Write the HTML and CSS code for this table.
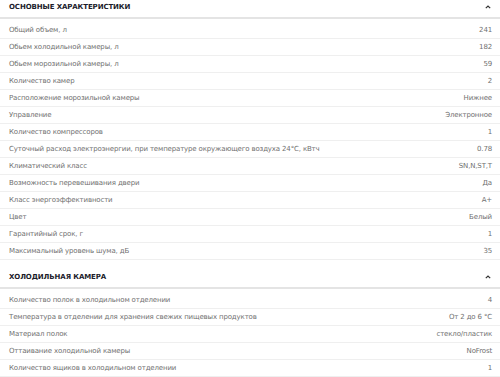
FILE: index.html
```html
<!DOCTYPE html>
<html lang="ru">
<head>
<meta charset="utf-8">
<link rel="stylesheet" href="styles.css">
</head>
<body>
<div class="specs">
  <section class="group">
    <div class="group-head">
      <span class="group-title">Основные характеристики</span>
      <svg class="chev" width="6" height="4" viewBox="0 0 6 4"><path d="M0.8 3.2 L3 1 L5.2 3.2" fill="none" stroke="#333" stroke-width="1.2"/></svg>
    </div>
    <div class="row"><span class="label">Общий объем, л</span><span class="value">241</span></div>
    <div class="row"><span class="label">Обьем холодильной камеры, л</span><span class="value">182</span></div>
    <div class="row"><span class="label">Обьем морозильной камеры, л</span><span class="value">59</span></div>
    <div class="row"><span class="label">Количество камер</span><span class="value">2</span></div>
    <div class="row"><span class="label">Расположение морозильной камеры</span><span class="value">Нижнее</span></div>
    <div class="row"><span class="label">Управление</span><span class="value">Электронное</span></div>
    <div class="row"><span class="label">Количество компрессоров</span><span class="value">1</span></div>
    <div class="row"><span class="label">Суточный расход электроэнергии, при температуре окружающего воздуха 24°С, кВтч</span><span class="value">0.78</span></div>
    <div class="row"><span class="label">Климатический класс</span><span class="value">SN,N,ST,T</span></div>
    <div class="row"><span class="label">Возможность перевешивания двери</span><span class="value">Да</span></div>
    <div class="row"><span class="label">Класс энергоэффективности</span><span class="value">A+</span></div>
    <div class="row"><span class="label">Цвет</span><span class="value">Белый</span></div>
    <div class="row"><span class="label">Гарантийный срок, г</span><span class="value">1</span></div>
    <div class="row"><span class="label">Максимальный уровень шума, дБ</span><span class="value">35</span></div>
  </section>
  <section class="group">
    <div class="group-head">
      <span class="group-title">Холодильная камера</span>
      <svg class="chev" width="6" height="4" viewBox="0 0 6 4"><path d="M0.8 3.2 L3 1 L5.2 3.2" fill="none" stroke="#333" stroke-width="1.2"/></svg>
    </div>
    <div class="row"><span class="label">Количество полок в холодильном отделении</span><span class="value">4</span></div>
    <div class="row"><span class="label">Температура в отделении для хранения свежих пищевых продуктов</span><span class="value">От 2 до 6 °С</span></div>
    <div class="row"><span class="label">Материал полок</span><span class="value">стекло/пластик</span></div>
    <div class="row"><span class="label">Оттаивание холодильной камеры</span><span class="value">NoFrost</span></div>
    <div class="row"><span class="label">Количество ящиков в холодильном отделении</span><span class="value">1</span></div>
  </section>
</div>
</body>
</html>
```

FILE: styles.css
```css
html, body {
  margin: 0;
  padding: 0;
  background: #ffffff;
}

body {
  font-family: "DejaVu Sans", "Noto Sans", sans-serif;
  overflow: hidden;
}

.specs {
  margin-top: -3px;
  display: flex;
  flex-direction: column;
  gap: 7px;
}

.group {
  display: flex;
  flex-direction: column;
}

.group-head {
  height: 20px;
  display: flex;
  align-items: center;
  justify-content: space-between;
  padding: 0 8px 0 9px;
  border-bottom: 2px solid #e4e4e4;
  margin-bottom: 3px;
}

.group-title {
  font-size: 7px;
  font-weight: 700;
  text-transform: uppercase;
  color: #1c1c2b;
  letter-spacing: -0.1px;
}

.chev {
  display: block;
  margin-right: 1px;
}

.row {
  height: 16px;
  display: flex;
  align-items: center;
  justify-content: space-between;
  padding: 0 8px 0 9px;
  border-bottom: 1px solid #efefef;
  font-size: 7px;
  letter-spacing: -0.15px;
  color: #707070;
}

.value {
  text-align: right;
}
```
